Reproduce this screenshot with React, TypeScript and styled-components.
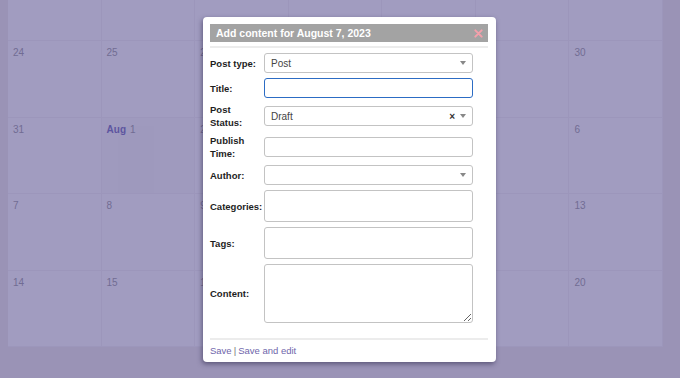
import React from 'react';
import styled, { createGlobalStyle } from 'styled-components';

const GlobalStyle = createGlobalStyle`
  html, body {
    margin: 0;
    padding: 0;
    width: 680px;
    height: 378px;
    overflow: hidden;
    background: #9a93b6;
    font-family: "Liberation Sans", Arial, sans-serif;
  }
`;

const Page = styled.div`
  position: relative;
  width: 680px;
  height: 378px;
  overflow: hidden;
`;

const Calendar = styled.div`
  display: grid;
  grid-template-columns: repeat(7, 93.57px);
  grid-auto-rows: 76.6px;
  margin: -35.6px 0 0 8px;
  width: 655px;
`;

const Cell = styled.div<{ $today?: boolean }>`
  box-sizing: border-box;
  background: ${(p) => (p.$today ? '#9f9abe' : '#a19cc0')};
  border-right: 1px solid #9c96bb;
  border-bottom: 1px solid #9c96bb;
  padding: 6px 5px;
  font-size: 10px;
  color: #716c93;
  position: relative;
`;

const Month = styled.span`
  font-weight: bold;
  color: #5d55a0;
  margin-right: 4px;
`;

const TodayMark = styled.div`
  position: absolute;
  left: 16px;
  top: 8px;
  width: 36px;
  bottom: 0;
  background: #9e99bd;
`;

const CellLabel = styled.span`
  position: relative;
`;

const Overlay = styled.div`
  position: absolute;
  left: 203px;
  top: 17px;
`;

const Modal = styled.div`
  box-sizing: border-box;
  width: 293px;
  height: 345px;
  background: #fff;
  border-radius: 4px;
  box-shadow: -1px 2px 5px rgba(40, 35, 70, 0.55);
  padding: 7px 8px 0 7px;
  display: flex;
  flex-direction: column;
`;

const Header = styled.div`
  height: 18px;
  background: #a3a3a3;
  display: flex;
  align-items: center;
  justify-content: space-between;
  padding: 0 5px 0 6px;
  color: #fff;
  font-weight: bold;
  font-size: 10.5px;
`;

const Close = styled.svg`
  width: 9px;
  height: 9px;
  display: block;
`;

const Divider = styled.div`
  height: 2px;
  background: #ececec;
  margin-top: 4px;
`;

const Form = styled.div`
  display: flex;
  flex-direction: column;
  gap: 5px;
  padding-top: 5px;
`;

const Row = styled.div<{ $tall?: boolean }>`
  display: flex;
  align-items: center;
  min-height: ${(p) => (p.$tall ? '26px' : '0')};
`;

const Label = styled.div`
  width: 54px;
  flex-shrink: 0;
  font-size: 9.5px;
  font-weight: bold;
  color: #1e1e1e;
  line-height: 13px;
`;

const Field = styled.div<{ $h?: number; $focus?: boolean }>`
  box-sizing: border-box;
  width: 209px;
  height: ${(p) => p.$h ?? 20}px;
  border: ${(p) => (p.$focus ? '1.5px solid #2c6cc4' : '1px solid #c3c3c3')};
  border-radius: 3px;
  background: #fff;
  display: flex;
  align-items: center;
  padding: 0 6px;
  font-size: 10px;
  color: #444;
`;

const Value = styled.span`
  flex: 1;
`;

const Clear = styled.span`
  font-size: 10px;
  font-weight: bold;
  color: #333;
  margin-right: 5px;
`;

const Arrow = styled.span`
  width: 0;
  height: 0;
  border-left: 3px solid transparent;
  border-right: 3px solid transparent;
  border-top: 4px solid #888;
`;

const Area = styled.textarea<{ $h: number }>`
  box-sizing: border-box;
  width: 209px;
  height: ${(p) => p.$h}px;
  border: 1px solid #c3c3c3;
  border-radius: 3px;
  margin: 0;
  padding: 4px 6px;
  font-family: inherit;
  font-size: 10px;
  resize: ${(p) => (p.$h > 40 ? 'both' : 'none')};
  outline: none;
`;

const Footer = styled.div`
  margin-top: auto;
  border-top: 2px solid #ececec;
  padding: 5px 0 6px;
  font-size: 9.5px;
  color: #6f66ab;
`;

const Sep = styled.span`
  color: #777;
  margin: 0 2px;
`;

// first week sits above the window, so its numbers are not shown
const rows: (number | null)[][] = [
  [null, null, null, null, null, null, null],
  [24, 25, 26, 27, 28, 29, 30],
  [31, 1, 2, 3, 4, 5, 6],
  [7, 8, 9, 10, 11, 12, 13],
  [14, 15, 16, 17, 18, 19, 20],
];

function Select({ value, clearable }: { value?: string; clearable?: boolean }) {
  return (
    <Field>
      <Value>{value}</Value>
      {clearable && <Clear>×</Clear>}
      <Arrow />
    </Field>
  );
}

export default function App() {
  return (
    <Page>
      <GlobalStyle />
      <Calendar>
        {rows.map((r, ri) =>
          r.map((d, ci) => {
            const today = ri === 2 && ci === 1;
            return (
              <Cell key={`${ri}-${ci}`} $today={today}>
                {today && <TodayMark />}
                {d !== null && (
                  <CellLabel>
                    {today && <Month>Aug</Month>}
                    {d}
                  </CellLabel>
                )}
              </Cell>
            );
          })
        )}
      </Calendar>
      <Overlay>
        <Modal>
          <Header>
            <span>Add content for August 7, 2023</span>
            <Close viewBox="0 0 10 10">
              <path d="M1.5 1.5 L8.5 8.5 M8.5 1.5 L1.5 8.5" stroke="#f4a0ab" strokeWidth="2.2" strokeLinecap="round" />
            </Close>
          </Header>
          <Divider />
          <Form>
            <Row>
              <Label>Post type:</Label>
              <Select value="Post" />
            </Row>
            <Row>
              <Label>Title:</Label>
              <Field $focus />
            </Row>
            <Row $tall>
              <Label>
                Post
                <br />
                Status:
              </Label>
              <Select value="Draft" clearable />
            </Row>
            <Row $tall>
              <Label>
                Publish
                <br />
                Time:
              </Label>
              <Field />
            </Row>
            <Row>
              <Label>Author:</Label>
              <Select />
            </Row>
            <Row>
              <Label>Categories:</Label>
              <Field $h={32} />
            </Row>
            <Row>
              <Label>Tags:</Label>
              <Field $h={32} />
            </Row>
            <Row>
              <Label>Content:</Label>
              <Area $h={59} />
            </Row>
          </Form>
          <Footer>
            Save<Sep>|</Sep>Save and edit
          </Footer>
        </Modal>
      </Overlay>
    </Page>
  );
}
